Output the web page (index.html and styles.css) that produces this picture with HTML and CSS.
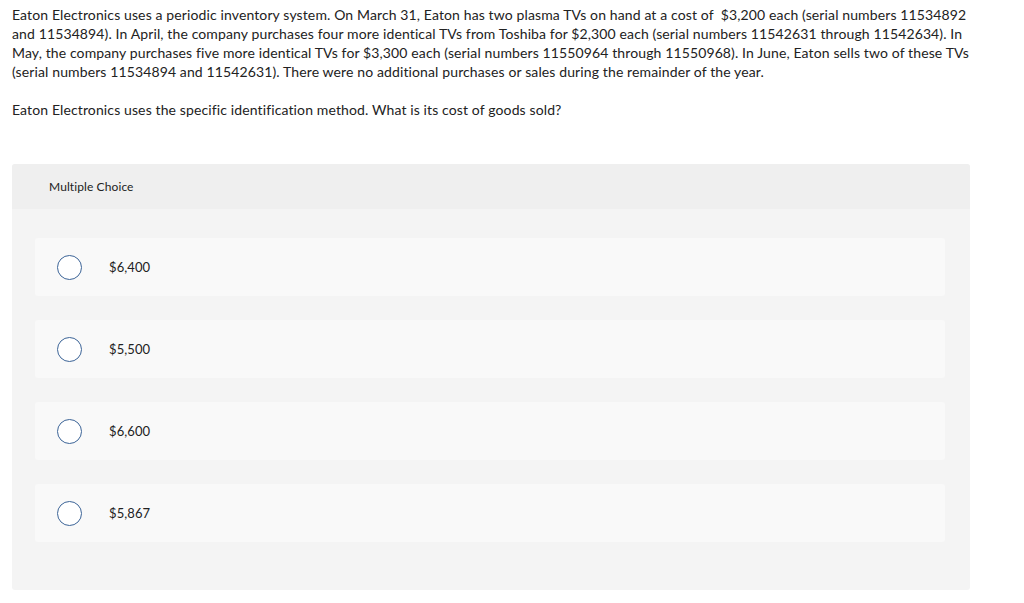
FILE: index.html
```html
<!DOCTYPE html>
<html>
<head>
<meta charset="utf-8">
<link rel="stylesheet" href="styles.css">
</head>
<body>
<div class="question">
  <p>Eaton Electronics uses a periodic inventory system. On March 31, Eaton has two plasma TVs on hand at a cost of &nbsp;$3,200 each (serial numbers 11534892 and 11534894). In April, the company purchases four more identical TVs from Toshiba for $2,300 each (serial numbers 11542631 through 11542634). In May, the company purchases five more identical TVs for $3,300 each (serial numbers 11550964 through 11550968). In June, Eaton sells two of these TVs (serial numbers 11534894 and 11542631). There were no additional purchases or sales during the remainder of the year.</p>
  <p>Eaton Electronics uses the specific identification method. What is its cost of goods sold?</p>
</div>
<div class="panel">
  <div class="panel-head">Multiple Choice</div>
  <div class="panel-body">
    <div class="option"><span class="radio"></span><span class="label">$6,400</span></div>
    <div class="option"><span class="radio"></span><span class="label">$5,500</span></div>
    <div class="option"><span class="radio"></span><span class="label">$6,600</span></div>
    <div class="option"><span class="radio"></span><span class="label">$5,867</span></div>
  </div>
</div>
</body>
</html>
```

FILE: styles.css
```css
html, body { margin: 0; padding: 0; background: #fff; }
body {
  font-family: "Lato", "Open Sans", sans-serif;
  color: #222;
  padding: 5px 12px 0 12px;
  width: 960px;
}
.question { width: 958px; }
.question p {
  margin: 0 0 19px 0;
  font-size: 14px;
  letter-spacing: 0.12px;
  line-height: 19px;
}
.question p:last-child { margin-bottom: 0; }
.panel {
  margin-top: 45px;
  width: 958px;
  background: #f4f4f4;
  border-radius: 3px;
}
.panel-head {
  height: 45px;
  background: #efefef;
  border-radius: 3px 3px 0 0;
  display: flex;
  align-items: center;
  padding-left: 37px;
  font-size: 12px;
  letter-spacing: 0.1px;
  color: #222;
}
.panel-body {
  padding: 29px 25px 48px 23px;
  display: flex;
  flex-direction: column;
  gap: 24px;
}
.option {
  height: 58px;
  background: #f9f9f9;
  border-radius: 3px;
  display: flex;
  align-items: center;
  padding-left: 22px;
}
.radio {
  width: 23px;
  height: 23px;
  border: 1.5px solid #3c6497;
  border-radius: 50%;
  background: #fff;
  flex: none;
}
.label {
  margin-left: 27px;
  font-size: 13px;
  letter-spacing: 0.1px;
  color: #222;
}
```
